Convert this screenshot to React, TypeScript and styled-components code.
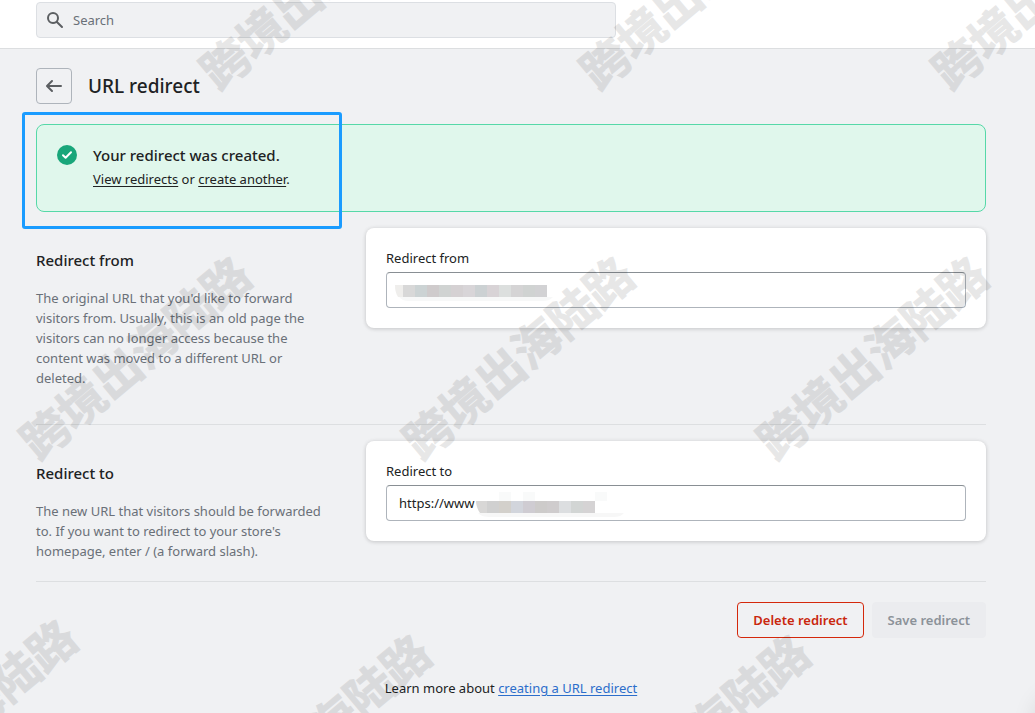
import React from 'react';
import styled, { createGlobalStyle } from 'styled-components';

const GlobalStyle = createGlobalStyle`
  *, *::before, *::after { box-sizing: border-box; }
  body {
    margin: 0;
    background: #f0f1f3;
    color: #202223;
    font: 400 13px/20px "Noto Sans", "Open Sans", sans-serif;
  }
`;

const Page = styled.div`
  position: relative;
  min-height: 100vh;
  overflow: hidden;
`;

const TopBar = styled.header`
  padding: 2px 36px 10px;
  background: #fff;
  border-bottom: 1px solid #dcdee0;
`;

const SearchBox = styled.label`
  display: flex;
  align-items: center;
  gap: 8px;
  width: 100%;
  max-width: 580px;
  height: 36px;
  padding: 0 8px;
  background: #f0f1f3;
  border: 1px solid #dcdfe3;
  border-radius: 4px;
  svg { flex: none; }
`;

const SearchInput = styled.input`
  flex: 1;
  min-width: 0;
  padding: 0;
  border: 0;
  outline: 0;
  background: transparent;
  font: inherit;
  color: #202223;
  &::placeholder { color: #6a7078; opacity: 1; }
`;

const Main = styled.main`
  padding: 19px 49px 14px 36px;
`;

const TitleRow = styled.div`
  display: flex;
  align-items: center;
  gap: 16px;
  margin-bottom: 20px;
`;

const BackButton = styled.button`
  display: grid;
  place-items: center;
  width: 36px;
  height: 36px;
  padding: 0;
  background: transparent;
  border: 1px solid #aeb4bb;
  border-radius: 4px;
`;

const Title = styled.h1`
  margin: 0;
  font-size: 19px;
  line-height: 28px;
  font-weight: 500;
`;

const BannerArea = styled.div`
  position: relative;
  margin-bottom: 16px;
`;

const Banner = styled.section`
  display: flex;
  gap: 16px;
  min-height: 88px;
  padding: 18px 20px;
  background: #e0f7ec;
  border: 1px solid #56d8a8;
  border-radius: 8px;
  svg { flex: none; margin-top: 2px; }
`;

const BannerBody = styled.div`
  display: grid;
  align-content: start;
  gap: 2px;
`;

const Highlight = styled.div`
  position: absolute;
  top: -12px;
  left: -14px;
  width: 320px;
  height: 117px;
  border: 3px solid #1a9cff;
  border-radius: 3px;
  pointer-events: none;
`;

const Heading = styled.h2`
  margin: 0;
  font-size: 15px;
  line-height: 24px;
  font-weight: 500;
`;

const Text = styled.p<{ $muted?: boolean }>`
  margin: 0;
  color: ${(p) => (p.$muted ? '#6a7078' : '#202223')};
`;

const Link = styled.a<{ $plain?: boolean }>`
  color: ${(p) => (p.$plain ? 'inherit' : '#2c6ecb')};
  text-decoration: underline;
  text-underline-offset: 2px;
`;

const Section = styled.section<{ $spaced?: boolean }>`
  display: grid;
  grid-template-columns: 1fr 2fr;
  align-items: start;
  gap: 20px;
  margin-bottom: 16px;
  padding-bottom: ${(p) => (p.$spaced ? 16 : 0)}px;
  border-bottom: 1px solid #dddfe1;
`;

const Description = styled.div`
  display: grid;
  gap: 16px;
  padding: 20px 20px 20px 0;
`;

const Card = styled.div`
  display: grid;
  gap: 4px;
  padding: 20px;
  background: #fff;
  border-radius: 8px;
  box-shadow: 0 0 5px rgba(23, 24, 24, 0.05), 0 1px 4px rgba(0, 0, 0, 0.15);
`;

const Field = styled.div`
  position: relative;
`;

const TextInput = styled.input`
  display: block;
  width: 100%;
  height: 36px;
  padding: 0 12px;
  background: #fff;
  border: 1px solid #aeb4bb;
  border-top-color: #898f94;
  border-radius: 4px;
  font: inherit;
  color: #202223;
`;

const Redaction = styled.svg<{ $left: number }>`
  position: absolute;
  top: 0;
  left: ${(p) => p.$left}px;
`;

const Actions = styled.div`
  display: flex;
  justify-content: flex-end;
  gap: 8px;
  padding-top: 4px;
`;

const Button = styled.button<{ $danger?: boolean }>`
  height: 36px;
  padding: 0 15px;
  font: inherit;
  font-weight: 600;
  border: 1px solid ${(p) => (p.$danger ? '#d4280b' : '#ebecef')};
  border-radius: 4px;
  color: ${(p) => (p.$danger ? '#c9270d' : '#8c9299')};
  background: ${(p) => (p.$danger ? 'transparent' : '#ebecef')};
`;

const Help = styled.footer`
  padding-top: 40px;
  text-align: center;
`;

const ChatShadow = styled.div`
  position: absolute;
  right: -60px;
  bottom: -40px;
  width: 60px;
  height: 60px;
  border-radius: 30px;
  box-shadow: 0 0 24px rgba(0, 0, 0, 0.12);
`;

const Watermarks = styled.div`
  position: absolute;
  inset: 0;
  overflow: hidden;
  pointer-events: none;
`;

const Mark = styled.span<{ $x: number; $y: number }>`
  position: absolute;
  left: ${(p) => p.$x}px;
  top: ${(p) => p.$y}px;
  transform: translate(-50%, -50%) rotate(-40deg);
  font: 700 47px/48px "Noto Sans CJK SC", sans-serif;
  white-space: nowrap;
  color: #000;
  -webkit-text-stroke: 1px #000;
  opacity: 0.09;
`;

const marks = [
  [314, -14], [694, -14], [1046, -14],
  [134, 356], [517, 356], [871, 356],
  [-40, 719], [314, 734], [693, 734],
];

const fromTiles = ['#d8d8d8', '#ccd3d4', '#cfcbcc', '#d0d3d2', '#d5d1d3', '#d8d5d8', '#ccd1d3', '#d8d3d6', '#dcdfde', '#d5d4d5', '#d0d3d2', '#d2d2d4'];
const toTiles = ['#d0d0d0', '#d3d0cb', '#d2d5dc', '#cfccd2', '#cdcbca', '#cfcccd', '#dcdee0', '#d2d5d4', '#d5d3d4'];

export default function App() {
  return (
    <Page>
      <GlobalStyle />
      <TopBar>
        <SearchBox>
          <svg width="20" height="20" viewBox="0 0 20 20" fill="#5c5f62">
            <path d="M8 12a4 4 0 1 1 0-8 4 4 0 0 1 0 8zm9.707 4.293-4.82-4.82A5.968 5.968 0 0 0 14 8 6 6 0 0 0 2 8a6 6 0 0 0 6 6 5.968 5.968 0 0 0 3.473-1.113l4.82 4.82a.997.997 0 0 0 1.414 0 .999.999 0 0 0 0-1.414z" />
          </svg>
          <SearchInput type="search" placeholder="Search" aria-label="Search" />
        </SearchBox>
      </TopBar>
      <Main>
        <TitleRow>
          <BackButton type="button" aria-label="Back">
            <svg width="20" height="20" viewBox="0 0 20 20" fill="#5c5f62">
              <path d="M17 9H5.414l3.293-3.293a.999.999 0 1 0-1.414-1.414l-5 5a.999.999 0 0 0 0 1.414l5 5a.997.997 0 0 0 1.414 0 .999.999 0 0 0 0-1.414L5.414 11H17a1 1 0 1 0 0-2z" />
            </svg>
          </BackButton>
          <Title>URL redirect</Title>
        </TitleRow>
        <BannerArea>
          <Banner>
            <svg width="20" height="20" viewBox="0 0 20 20">
              <circle cx="10" cy="10" r="10" fill="#19a67a" />
              <path d="m6 10.300 2.600 2.500 5.400-5.500" fill="none" stroke="#fff" strokeWidth="2" strokeLinecap="round" strokeLinejoin="round" />
            </svg>
            <BannerBody>
              <Heading>Your redirect was created.</Heading>
              <Text>
                <Link $plain href="#redirects">View redirects</Link> or <Link $plain href="#new">create another</Link>.
              </Text>
            </BannerBody>
          </Banner>
          <Highlight />
        </BannerArea>
        <Section $spaced>
          <Description>
            <Heading>Redirect from</Heading>
            <Text $muted>
              The original URL that you'd like to forward visitors from. Usually, this is an old page the visitors can
              no longer access because the content was moved to a different URL or deleted.
            </Text>
          </Description>
          <Card>
            <label htmlFor="from">Redirect from</label>
            <Field>
              <TextInput id="from" type="text" />
              <Redaction $left={8} width="160" height="36" aria-hidden="true">
                <path d="M1 13h8v12h150c-3 3-6 4-10 4H14c-7 0-13-6-13-16z" fill="#f7f8f8" />
                <path d="M1 13h8v12H4c-2-3-3-7-3-12z" fill="#efeeec" />
                {fromTiles.map((c, i) => (
                  <rect key={i} x={9 + i * 12} y="13" width="12" height="12" fill={c} />
                ))}
              </Redaction>
            </Field>
          </Card>
        </Section>
        <Section>
          <Description>
            <Heading>Redirect to</Heading>
            <Text $muted>
              The new URL that visitors should be forwarded to. If you want to redirect to your store's homepage, enter
              / (a forward slash).
            </Text>
          </Description>
          <Card>
            <label htmlFor="to">Redirect to</label>
            <Field>
              <TextInput id="to" type="text" defaultValue="https://www" />
              <Redaction $left={90} width="160" height="36" aria-hidden="true">
                <path d="M23 7h12v9H23zM47 7h12v9H47zM119 7h12v9h-12z" fill="#f9fafa" />
                <path d="M2 28h146c-3 3-6 4-10 4H14c-5 0-9-1-12-4z" fill="#f7f7f7" />
                <path d="M0 16h11v12H4c-2-3-4-7-4-12z" fill="#d8d7d6" />
                {toTiles.map((c, i) => (
                  <rect key={i} x={11 + i * 12} y="16" width="12" height="12" fill={c} />
                ))}
              </Redaction>
            </Field>
          </Card>
        </Section>
        <Actions>
          <Button $danger type="button">Delete redirect</Button>
          <Button type="button" disabled>Save redirect</Button>
        </Actions>
        <Help>
          Learn more about <Link href="#help">creating a URL redirect</Link>
        </Help>
      </Main>
      <ChatShadow />
      <Watermarks aria-hidden="true">
        {marks.map(([x, y]) => (
          <Mark key={`${x},${y}`} $x={x} $y={y}>跨境出海陆路</Mark>
        ))}
      </Watermarks>
    </Page>
  );
}
